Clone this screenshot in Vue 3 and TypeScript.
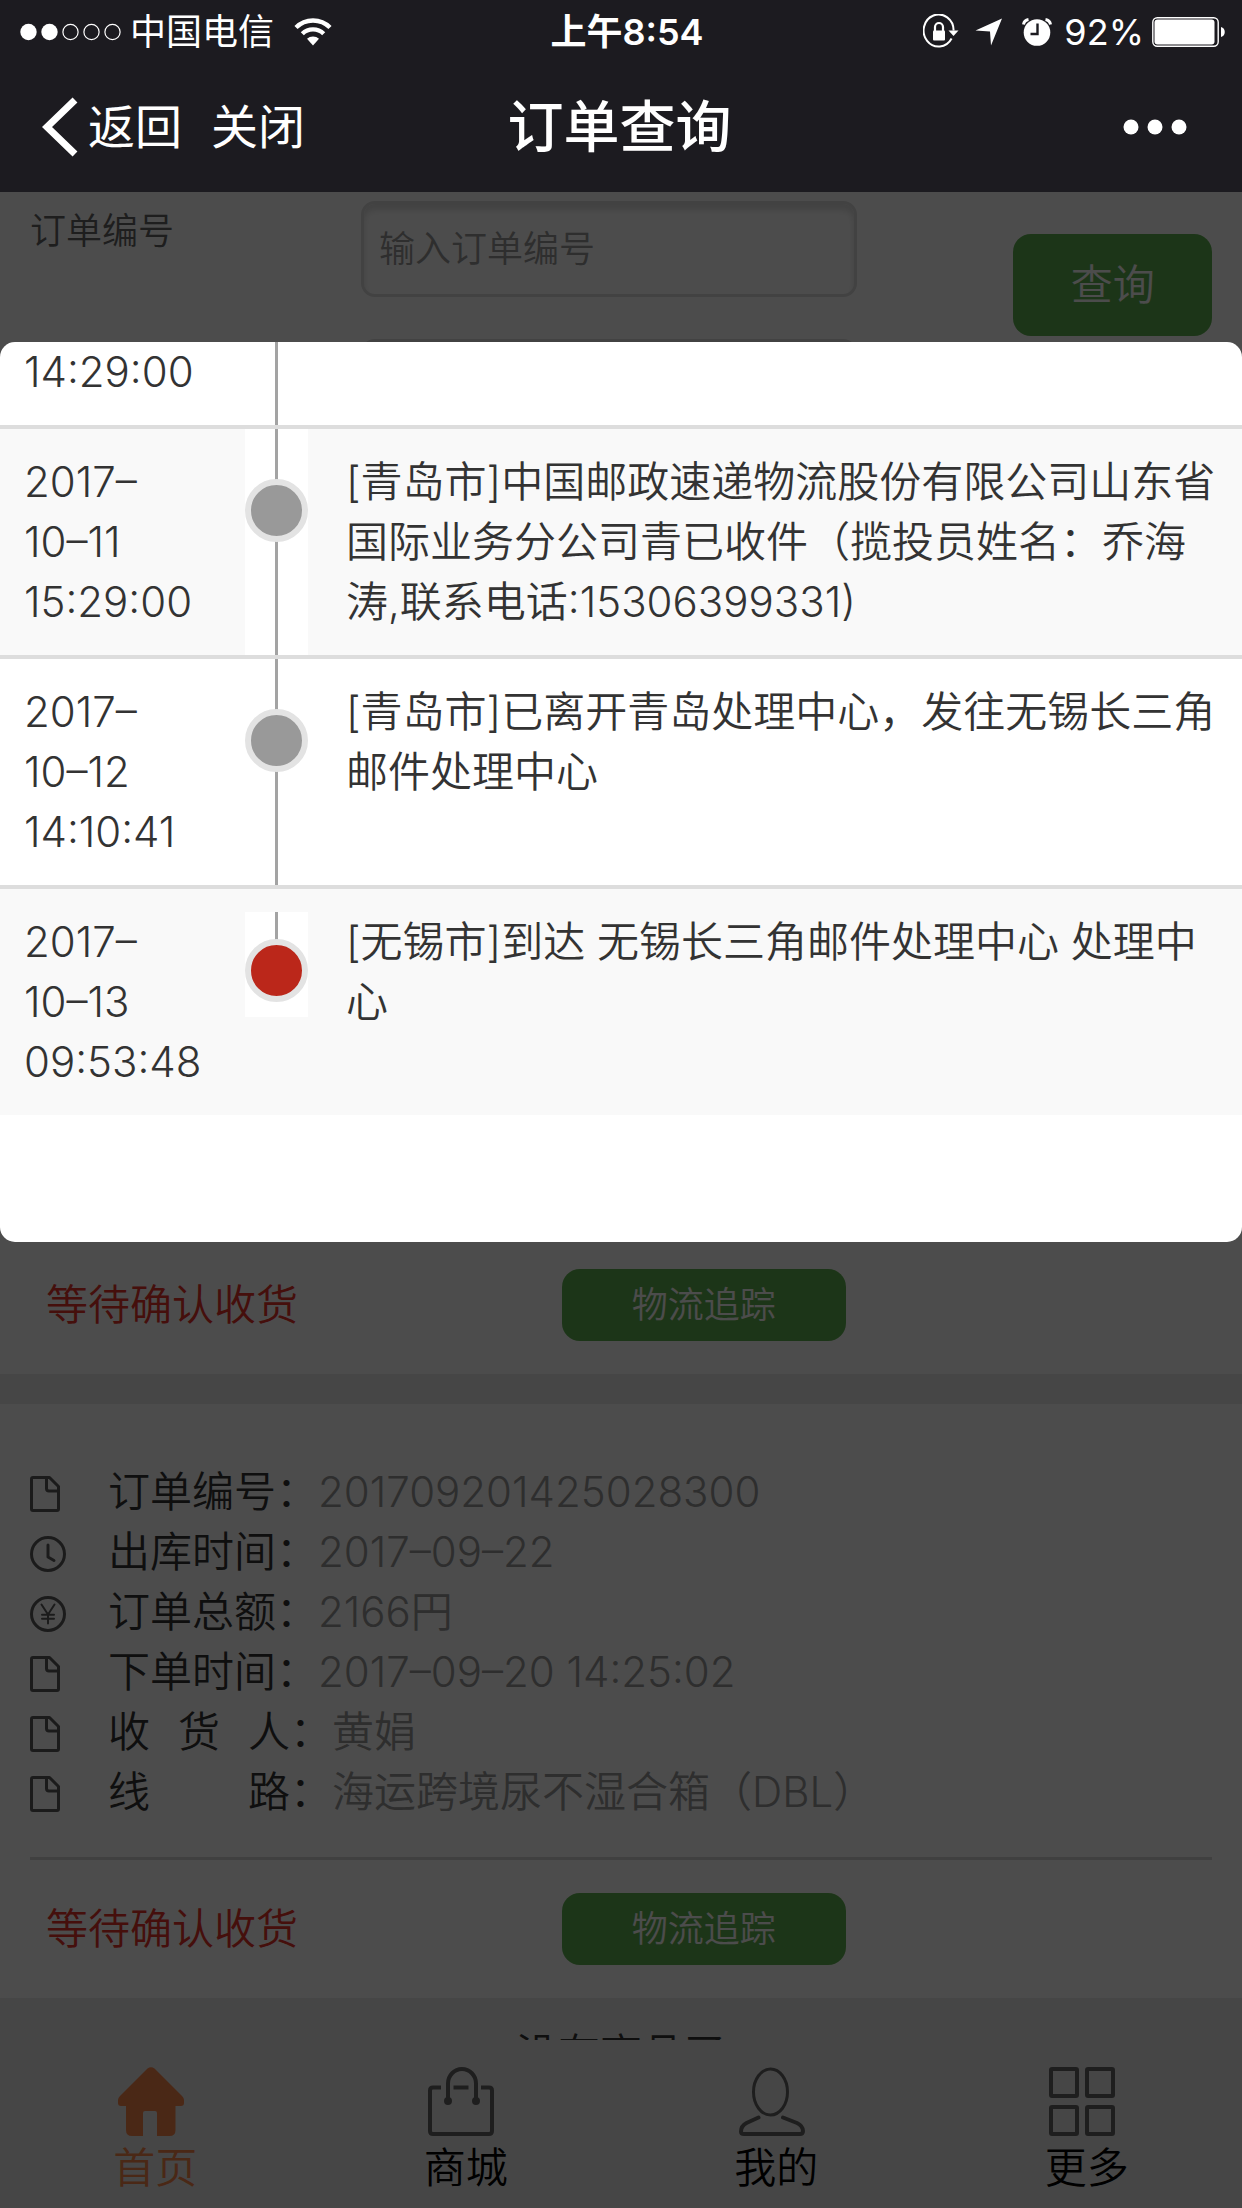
<script setup lang="ts">
interface TrackEvent {
  time: string[]
  text: string
  current?: boolean
}

interface InfoRow {
  icon: 'doc' | 'clock' | 'yen'
  label: string[]
  spread?: boolean
  value: string
}

const events: TrackEvent[] = [
  { time: ['14:29:00'], text: '' },
  {
    time: ['2017–', '10–11', '15:29:00'],
    text: '[青岛市]中国邮政速递物流股份有限公司山东省国际业务分公司青已收件（揽投员姓名：乔海涛,联系电话:15306399331)',
  },
  {
    time: ['2017–', '10–12', '14:10:41'],
    text: '[青岛市]已离开青岛处理中心，发往无锡长三角邮件处理中心',
  },
  {
    time: ['2017–', '10–13', '09:53:48'],
    text: '[无锡市]到达 无锡长三角邮件处理中心 处理中心',
    current: true,
  },
]

const info: InfoRow[] = [
  { icon: 'doc', label: ['订单编号'], value: '201709201425028300' },
  { icon: 'clock', label: ['出库时间'], value: '2017–09–22' },
  { icon: 'yen', label: ['订单总额'], value: '2166円' },
  { icon: 'doc', label: ['下单时间'], value: '2017–09–20 14:25:02' },
  { icon: 'doc', label: ['收', '货', '人'], spread: true, value: '黄娟' },
  { icon: 'doc', label: ['线', '路'], spread: true, value: '海运跨境尿不湿合箱（DBL）' },
]

const tabs = [
  { key: 'home', name: '首页' },
  { key: 'shop', name: '商城' },
  { key: 'mine', name: '我的' },
  { key: 'more', name: '更多' },
]
</script>

<template>
  <div class="screen">
    <header class="header">
      <div class="status">
        <div class="status-left">
          <svg class="signal" width="101" height="18" viewBox="0 0 101 18" aria-hidden="true">
            <circle cx="8.5" cy="9" r="8.2" fill="#fff" />
            <circle cx="29.5" cy="9" r="8.2" fill="#fff" />
            <g fill="none" stroke="#fff" stroke-width="1.2">
              <circle cx="50.5" cy="9" r="7.6" />
              <circle cx="71.5" cy="9" r="7.6" />
              <circle cx="92.5" cy="9" r="7.6" />
            </g>
          </svg>
          <span>中国电信</span>
          <svg class="wifi" width="38" height="28" viewBox="0 0 38 28" aria-hidden="true">
            <g fill="none" stroke="#fff" stroke-width="4.4">
              <path d="M2 9.5a24 24 0 0 1 34 0" />
              <path d="M8.3 15.8a15.2 15.2 0 0 1 21.4 0" />
            </g>
            <path d="M19 27.5l-6-6.8a9 9 0 0 1 12 0z" fill="#fff" />
          </svg>
        </div>
        <div class="status-time">上午8:54</div>
        <div class="status-right">
          <svg class="lock" width="36" height="36" viewBox="0 0 36 36" aria-hidden="true">
            <path d="M28.600 24.500a15 16 0 1 1 2-8" fill="none" stroke="#fff" stroke-width="2" />
            <path d="M25.500 16.500h10l-5 5.500z" fill="#fff" />
            <rect x="10" y="16.500" width="12" height="10" rx="1" fill="#fff" />
            <path d="M12 17v-4a4 4 0 0 1 8 0v4" fill="none" stroke="#fff" stroke-width="2.200" />
          </svg>
          <svg class="arrow" width="28" height="28" viewBox="0 0 28 28" aria-hidden="true">
            <path d="M27 0.500L16 27.500l-1-14L0.500 12.500z" fill="#fff" />
          </svg>
          <svg class="alarm" width="30" height="28" viewBox="0 0 30 28" aria-hidden="true">
            <circle cx="15" cy="14.500" r="13.300" fill="#fff" />
            <path d="M1.500 6.500a6 6 0 0 1 5-5M28.500 6.500a6 6 0 0 0-5-5" fill="none" stroke="#fff" stroke-width="3" />
            <path d="M15.500 5.500v10.500h-7" fill="none" stroke="#1c1b20" stroke-width="2.400" />
          </svg>
          <span>92%</span>
          <svg class="battery" width="74" height="30" viewBox="0 0 74 30" aria-hidden="true">
            <rect x="0.800" y="0.800" width="65.400" height="28.400" rx="4.500" fill="none" stroke="#fff" stroke-width="1.400" />
            <rect x="2.500" y="2.500" width="60" height="25" rx="3" fill="#fff" />
            <path d="M69 10c5 1 5 9 0 10z" fill="#fff" />
          </svg>
        </div>
      </div>
      <nav class="nav">
        <div class="nav-left">
          <button type="button" class="nav-btn">
            <svg width="36" height="60" viewBox="0 0 36 60" aria-hidden="true">
              <path d="M33 3L5 30l28 27" fill="none" stroke="#fff" stroke-width="7" />
            </svg>
            返回
          </button>
          <button type="button" class="nav-btn">关闭</button>
        </div>
        <h1 class="title">订单查询</h1>
        <button type="button" class="menu" aria-label="菜单">
          <svg width="64" height="16" viewBox="0 0 64 16" aria-hidden="true">
            <circle cx="8" cy="8" r="7.500" fill="#fff" />
            <circle cx="32" cy="8" r="7.500" fill="#fff" />
            <circle cx="56" cy="8" r="7.500" fill="#fff" />
          </svg>
        </button>
      </nav>
    </header>

    <div class="body">
      <main class="content">
        <form class="search" @submit.prevent>
          <label class="search-label" for="order-no">订单编号</label>
          <div class="fields">
            <input id="order-no" class="field" type="text" placeholder="输入订单编号" />
            <input class="field" type="text" aria-label="查询条件" />
          </div>
          <button class="query" type="submit">查询</button>
        </form>

        <div class="orders">
          <section class="card">
            <div class="card-foot">
              <span class="state">等待确认收货</span>
              <button type="button" class="track">物流追踪</button>
            </div>
          </section>

          <section class="card">
            <ul class="info">
              <li v-for="row in info" :key="row.label.join('')" class="info-row">
                <svg class="info-icon" width="36" height="36" viewBox="0 0 36 36" aria-hidden="true">
                  <g fill="none" stroke="#5c5c5c" stroke-width="3" stroke-linejoin="round" stroke-linecap="round">
                    <path v-if="row.icon === 'doc'" d="M1.500 3q0-1.500 1.500-1.500h16.500l9 9v22.500q0 1.500-1.500 1.500h-24q-1.500 0-1.500-1.500zM16.500 2v10.500q0 2.500 2.500 2.500h9.500" />
                    <template v-else-if="row.icon === 'clock'">
                      <circle cx="18" cy="18" r="16.500" />
                      <path d="M18 9v12l6 3.500" />
                    </template>
                    <template v-else>
                      <circle cx="18" cy="18" r="16.500" />
                      <path d="M11.500 8.500l6.500 10 6.500-10M18 18.500v9M12 18.800h12M12 22.800h12" stroke-width="2" />
                    </template>
                  </g>
                </svg>
                <span class="info-label" :class="{ spread: row.spread }">
                  <span v-for="part in row.label" :key="part">{{ part }}</span>
                </span>
                <span class="colon">：</span>
                <span class="info-value">{{ row.value }}</span>
              </li>
            </ul>
            <div class="card-foot">
              <span class="state">等待确认收货</span>
              <button type="button" class="track">物流追踪</button>
            </div>
          </section>

          <p class="end">没有商品了</p>
        </div>
      </main>

      <nav class="tabs">
        <a v-for="tab in tabs" :key="tab.key" class="tab" :class="{ active: tab.key === 'home' }" href="#">
          <svg class="tab-icon" width="66" height="69" viewBox="0 0 66 69" aria-hidden="true">
            <path v-if="tab.key === 'home'" fill="currentColor" d="M29.500 1.500Q33 -1 36.500 1.500L64 29Q66 31 66 33v3q0 3-3 3h-5.500v24q0 6-6 6h-12.500v-23q0-2-2-2h-10q-2 0-2 2v23h-11q-6 0-6-6v-24h-5q-3 0-3-3v-3q0-2 2-4z" />
            <g v-else fill="none" stroke="#666" stroke-width="4" stroke-linejoin="round">
              <template v-if="tab.key === 'shop'">
                <path d="M13 20.500h-8q-3 0-3 3v40.500q0 3 3 3h56q3 0 3-3v-40.500q0-3-3-3h-8M25.500 20.500h15" />
                <path d="M20 33v-16.500a14 14.500 0 0 1 28 0v16.500" />
                <circle cx="20" cy="34" r="2" fill="#666" />
                <circle cx="48" cy="34" r="2" fill="#666" />
              </template>
              <template v-else-if="tab.key === 'mine'">
                <ellipse cx="31.500" cy="25" rx="17" ry="23" stroke-width="3" />
                <path d="M19.500 50.500l-12 5.500q-5.500 3-5.500 8.500 0 2.500 3 2.500h56q3 0 3-3 0-5-6-8l-14-5.500" stroke-linecap="round" />
              </template>
              <template v-else>
                <rect x="2" y="2" width="26" height="27" rx="1" />
                <rect x="38" y="2" width="26" height="27" rx="1" />
                <rect x="2" y="40" width="26" height="27" rx="1" />
                <rect x="38" y="40" width="26" height="27" rx="1" />
              </template>
            </g>
          </svg>
          <span>{{ tab.name }}</span>
        </a>
      </nav>

      <div class="mask"></div>

      <div class="sheet" role="dialog" aria-label="物流追踪">
        <ol class="events">
          <li v-for="(event, i) in events" :key="i" class="event" :class="{ current: event.current, cut: !event.text }">
            <div class="when">
              <span v-for="part in event.time" :key="part">{{ part }}</span>
            </div>
            <div class="axis">
              <span v-if="event.text" class="dot"></span>
            </div>
            <p class="what">{{ event.text }}</p>
          </li>
        </ol>
      </div>
    </div>
  </div>
</template>

<style>
body {
  margin: 0;
  background: #4c4c4c;
}
</style>

<style scoped>
.screen {
  display: flex;
  flex-direction: column;
  height: 100vh;
  overflow: hidden;
  font-family: Inter, 'Noto Sans CJK SC', sans-serif;
  font-size: 42px;
  font-weight: 350;
  line-height: 60px;
  color: #333;
}

button,
input {
  font: inherit;
}

button {
  padding: 0;
  border: 0;
  background: none;
  color: inherit;
}

svg {
  display: block;
  flex: none;
}

.header {
  flex: none;
  background: #1c1b20;
  color: #fff;
  font-weight: 400;
}

.status {
  box-sizing: border-box;
  display: grid;
  grid-template-columns: 1fr auto 1fr;
  align-items: center;
  height: 60px;
  padding: 2px 16px 0 20px;
  font-size: 36px;
}

.status-left,
.status-right {
  display: flex;
  align-items: center;
}

.signal {
  margin-right: 9px;
}

.wifi {
  margin-left: 20px;
}

.status-time {
  padding-left: 8px;
  font-weight: 600;
}

.status-right {
  justify-content: flex-end;
}

.arrow {
  margin: 0 19px 0 16px;
}

.alarm {
  margin-right: 12px;
}

.battery {
  margin-left: 8px;
}

.nav {
  box-sizing: border-box;
  display: grid;
  grid-template-columns: 1fr auto 1fr;
  align-items: center;
  height: 132px;
  padding: 2px 45px 0 42px;
  font-size: 47px;
}

.nav-left {
  display: flex;
  gap: 29px;
}

.nav-btn {
  display: flex;
  align-items: center;
  gap: 10px;
}

.title {
  margin: 0;
  font-size: 56px;
  font-weight: 500;
}

.menu {
  justify-self: end;
  margin-right: 10px;
}

.body {
  position: relative;
  display: flex;
  flex-direction: column;
  flex: 1;
  min-height: 0;
  background: #fff;
}

.content {
  display: flex;
  flex-direction: column;
  flex: 1;
  min-height: 0;
  overflow: hidden;
}

.search {
  display: grid;
  grid-template-columns: 28% 42% 30%;
  align-items: start;
  padding: 9px 30px 0;
}

.search-label {
  font-size: 36px;
  color: #666;
}

.fields {
  display: flex;
  flex-direction: column;
  gap: 42px;
}

.field {
  box-sizing: border-box;
  width: 100%;
  height: 96px;
  padding: 0 15px;
  border: 3px solid #ddd;
  border-radius: 14px;
  background: #fff;
  box-shadow: inset 0 6px 6px #ddd;
  font-size: 36px;
}

.field::placeholder {
  color: #999;
  opacity: 1;
}

.query {
  justify-self: end;
  width: 56%;
  height: 102px;
  margin-top: 33px;
  border-radius: 18px;
  background: #5fb150;
  color: #fff;
}

.orders {
  margin-top: auto;
  background: #ebebeb;
}

.card {
  background: #fff;
  padding: 0 30px;
}

.card + .card {
  margin-top: 30px;
  padding-top: 58px;
}

.info {
  margin: 0 0 35px;
  padding: 0;
  list-style: none;
}

.info-row {
  display: flex;
  align-items: center;
}

.info-icon {
  margin: 4px 42px 0 0;
}

.info-label {
  display: flex;
  justify-content: space-between;
}

.info-label.spread {
  width: 182px;
}

.info-value {
  color: #999;
}

.card-foot {
  display: grid;
  grid-template-columns: 45% 24% 1fr;
  align-items: center;
  padding: 33px 0;
  border-top: 3px solid #d6d6d6;
}

.state {
  padding-left: 16px;
  color: #e6322a;
}

.track {
  height: 72px;
  border-radius: 18px;
  background: #5fb150;
  color: #fff;
  font-size: 36px;
}

.end {
  box-sizing: border-box;
  height: 42px;
  margin: 0;
  padding-top: 26px;
  overflow: hidden;
  text-align: center;
}

.tabs {
  display: grid;
  grid-template-columns: repeat(4, 1fr);
  flex: none;
  padding: 27px 0 10px;
  background: #ebebeb;
}

.tab {
  display: flex;
  flex-direction: column;
  align-items: center;
  gap: 2px;
  color: #000;
  text-decoration: none;
}

.tab.active {
  color: #f8854a;
}

.tab-icon {
  margin-right: 9px;
}

.mask {
  position: absolute;
  inset: 0;
  background: rgba(0, 0, 0, 0.7);
}

.sheet {
  position: absolute;
  top: 150px;
  left: 0;
  right: 0;
  padding-bottom: 127px;
  overflow: hidden;
  border-radius: 15px;
  background: #fff;
}

.events {
  margin: 0;
  padding: 0;
  list-style: none;
}

.event {
  display: grid;
  grid-template-columns: 221px 63px 1fr;
  padding: 0 20px 0 24px;
}

.event + .event {
  border-top: 4px solid #ddd;
}

.event:nth-child(even) {
  background: #f9f9f9;
}

.when {
  display: flex;
  flex-direction: column;
  padding: 23px 0;
}

.cut .when {
  padding-top: 0;
}

.what {
  margin: 0;
  padding: 23px 0 23px 38px;
}

.axis {
  display: flex;
  justify-content: center;
  align-items: flex-start;
  padding-top: 50px;
  background: linear-gradient(#a3a3a3, #a3a3a3) center / 3px 100% no-repeat #fff;
}

.current .axis {
  height: 78px;
  margin-top: 23px;
  padding-top: 27px;
  background-size: 3px 40px;
  background-position: center top;
}

.dot {
  box-sizing: border-box;
  width: 63px;
  height: 63px;
  border: 6px solid #e3e3e3;
  border-radius: 50%;
  background: #999;
}

.current .dot {
  background: #bb271a;
}
</style>
